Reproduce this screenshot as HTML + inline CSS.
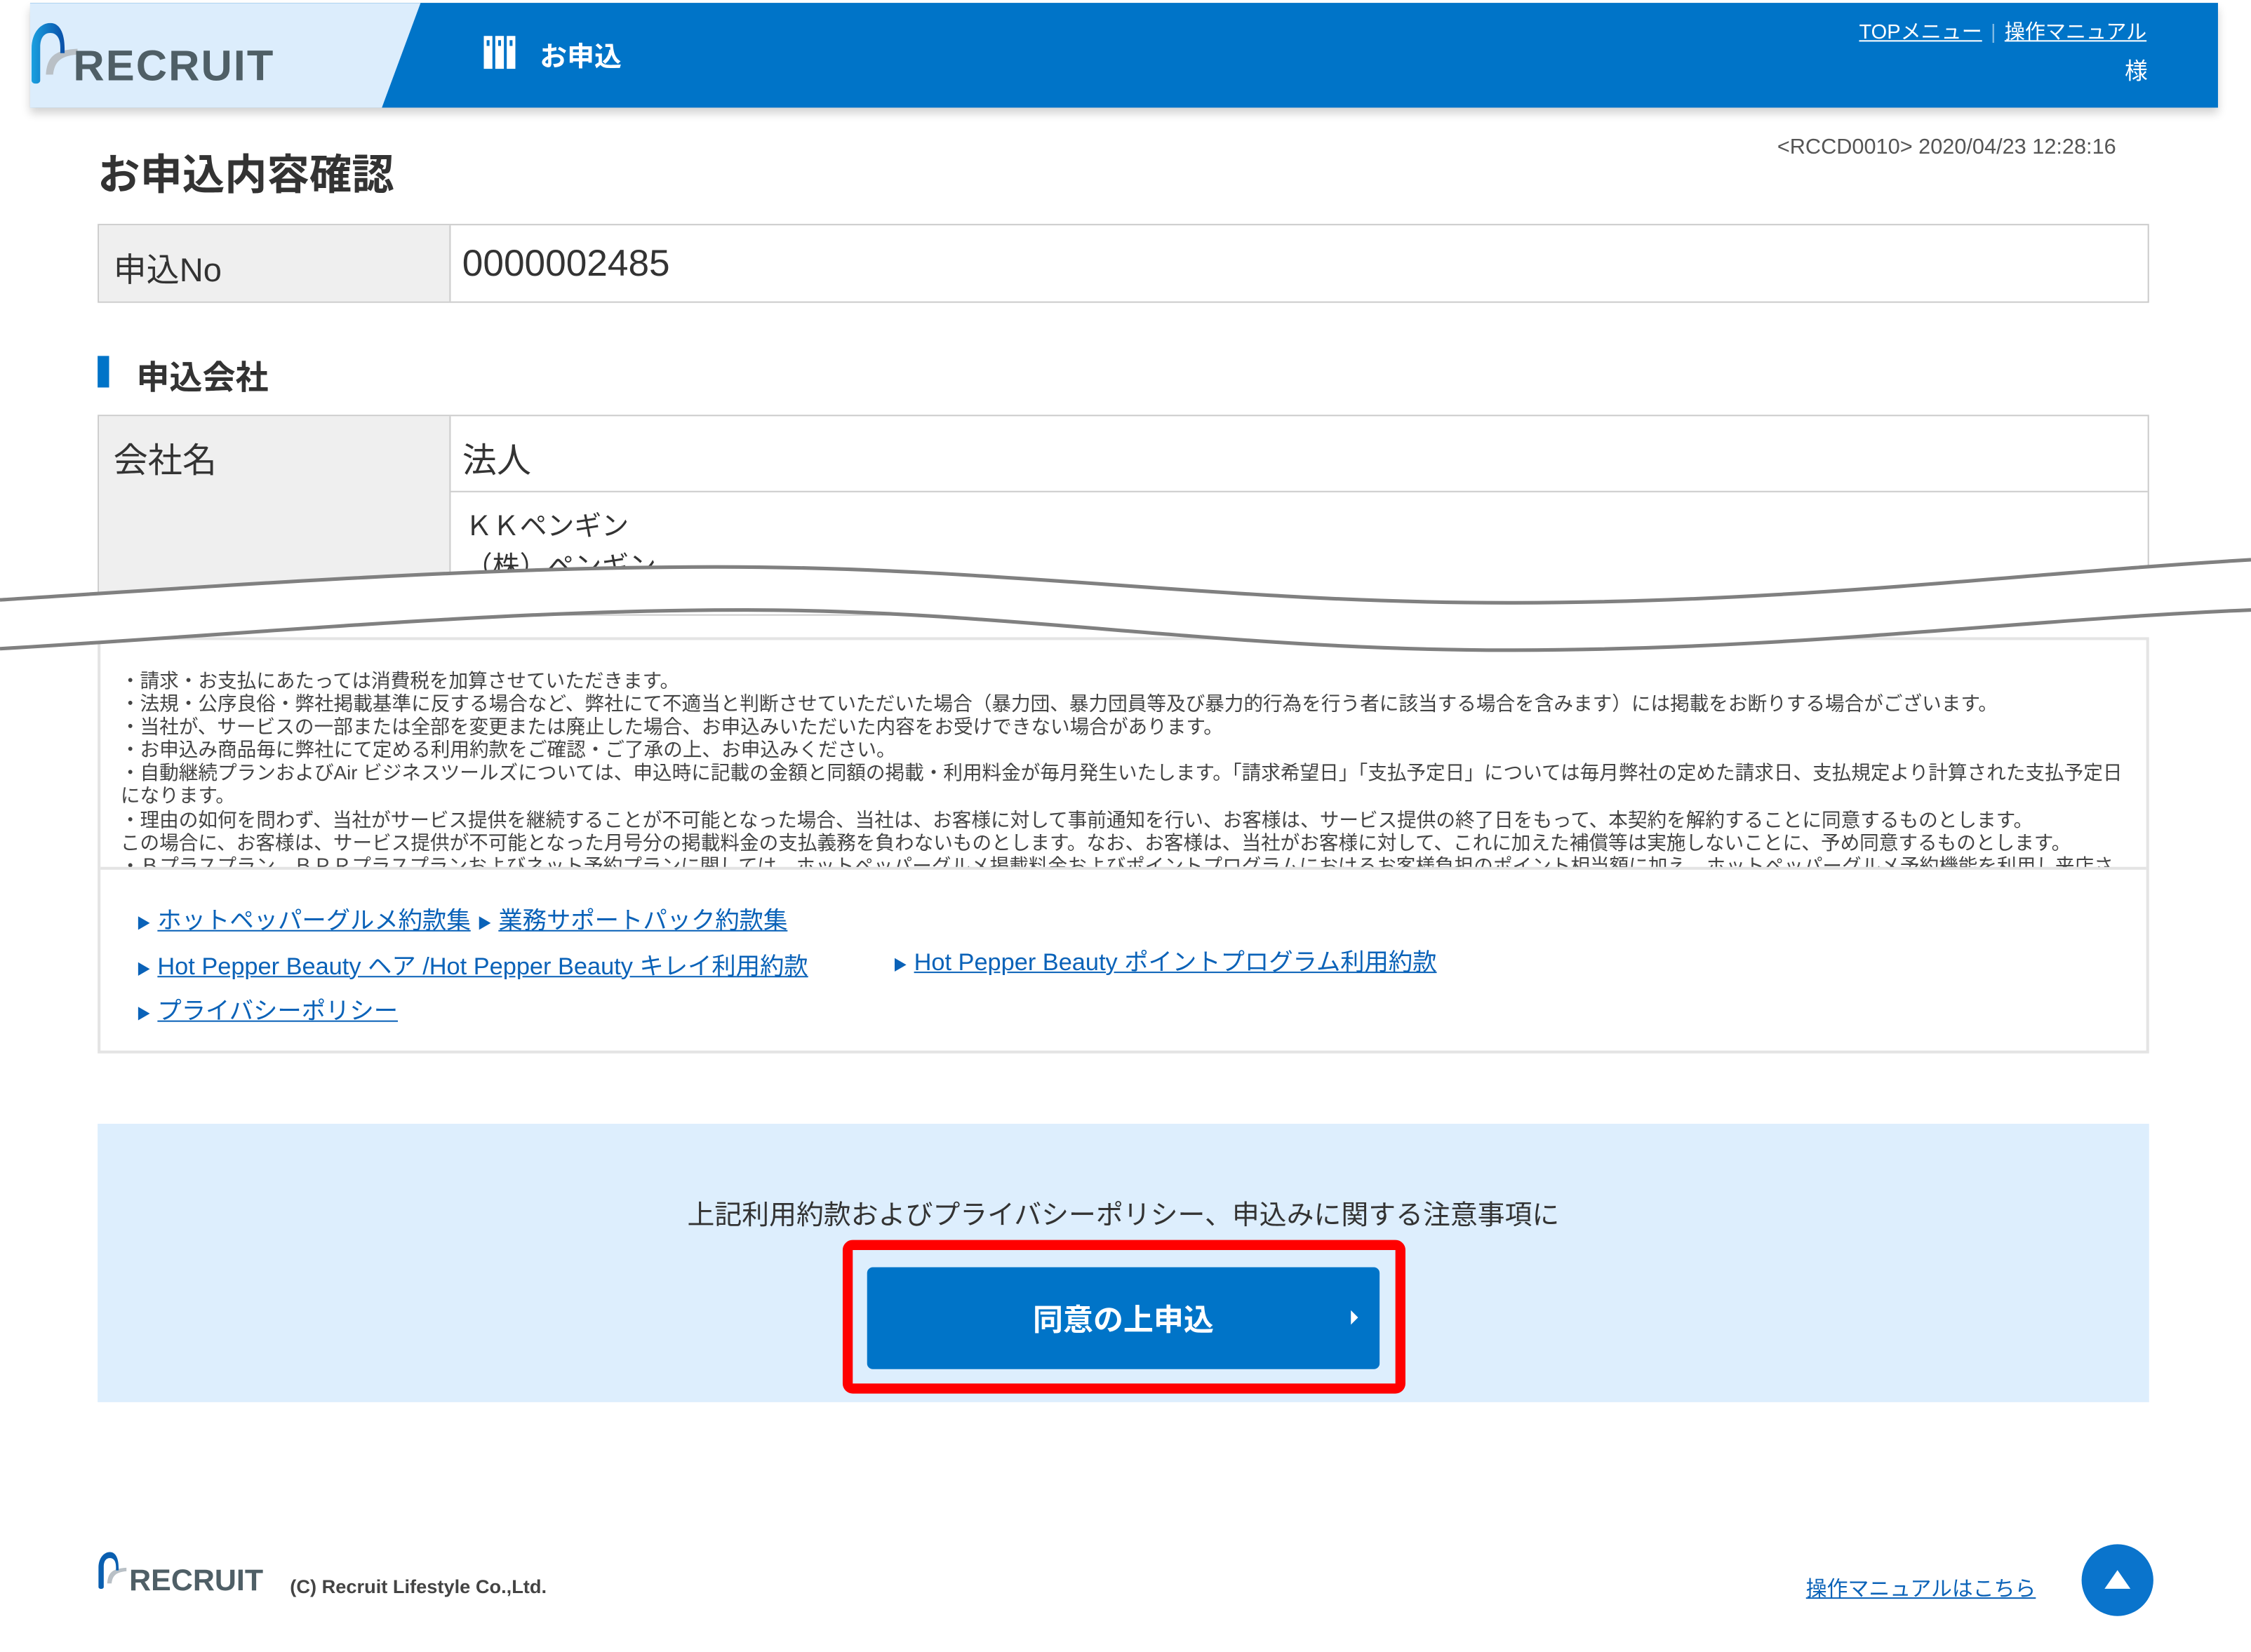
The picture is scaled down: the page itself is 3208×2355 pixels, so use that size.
<!DOCTYPE html>
<html><head><meta charset="utf-8"><style>
html,body{margin:0;padding:0;background:#fff;width:3208px;height:2355px;overflow:hidden}
#w{position:absolute;left:0;top:0;width:1568px;height:1151px;transform:scale(2.04592);transform-origin:0 0;font-family:"Liberation Sans","Noto Sans CJK JP",sans-serif;color:#333}
.a{position:absolute}
a{color:#0a62b8}
.lk{color:#0a62b8;text-decoration:underline}
</style></head><body><div id="w">
<div class="a" style="left:21px;top:2px;width:1524px;height:73px;background:#0074c8;box-shadow:0 4px 6px rgba(0,0,0,.18)"></div>
<div class="a" style="left:21px;top:2px;width:272px;height:73px;background:#dcedfc;clip-path:polygon(0 0,100% 0,245px 100%,0 100%)"></div>
<svg class="a" style="left:21px;top:16px" width="46" height="48" viewBox="0 0 46 48">
<defs><linearGradient id="g" x1="0" x2="1"><stop offset="0" stop-color="#1aa0e0"/><stop offset="1" stop-color="#0a4fa8"/></linearGradient></defs>
<path d="M11 36 C12 24 16 19 33 18 L33 22 C20 23 17 28 16 36Z" fill="#b9c0c6"/>
<path d="M1 40 L1 18 C1 6 8 0 14 0 C20 0 24 6 24 18 L24 21 L21 21 L21 17 C21 10 18 7 14 7 C10 7 7 10 7 17 L7 40 C7 43 1 43 1 40Z" fill="url(#g)"/>
</svg>
<div class="a" style="left:51px;top:30px;font-size:30px;font-weight:bold;color:#4f5f66;letter-spacing:1px">RECRUIT</div>
<svg class="a" style="left:337px;top:25px" width="22" height="23"><rect x="0" y="0" width="6" height="23" fill="#fff"/><rect x="8" y="0" width="6" height="23" fill="#fff"/><rect x="16" y="0" width="6" height="23" fill="#fff"/><rect x="2" y="3" width="2" height="4" fill="#0074c8"/><rect x="10" y="3" width="2" height="4" fill="#0074c8"/><rect x="18" y="3" width="2" height="4" fill="#0074c8"/></svg>
<div class="a" style="left:376px;top:25px;font-size:19px;font-weight:bold;color:#fff">お申込</div>
<div class="a" style="left:1295px;top:12px;font-size:14.2px;color:#fff"><span style="text-decoration:underline">TOPメニュー</span><span style="opacity:.5;margin:0 6px">|</span><span style="text-decoration:underline">操作マニュアル</span></div>
<div class="a" style="left:1480px;top:36px;font-size:16px;color:#fff">様</div>
<div class="a" style="left:68px;top:99px;font-size:29.5px;font-weight:bold;color:#333">お申込内容確認</div>
<div class="a" style="left:1238px;top:94px;font-size:15px;color:#555">&lt;RCCD0010&gt; 2020/04/23 12:28:16</div>
<div class="a" style="left:68px;top:156px;width:1429px;height:55px;border:1px solid #ccc;box-sizing:border-box"></div>
<div class="a" style="left:69px;top:157px;width:244px;height:53px;background:#efefef;border-right:1px solid #ccc"></div>
<div class="a" style="left:79px;top:169px;font-size:23px">申込No</div>
<div class="a" style="left:322px;top:168px;font-size:26px">0000002485</div>
<div class="a" style="left:68px;top:248px;width:8px;height:22px;background:#0074c8"></div>
<div class="a" style="left:95px;top:244px;font-size:23px;font-weight:bold">申込会社</div>
<div class="a" style="left:68px;top:289px;width:1429px;height:140px;border:1px solid #ccc;box-sizing:border-box"></div>
<div class="a" style="left:69px;top:290px;width:244px;height:140px;background:#efefef;border-right:1px solid #ccc"></div>
<div class="a" style="left:314px;top:342px;width:1182px;border-top:1px solid #ccc"></div>
<div class="a" style="left:79px;top:301px;font-size:24px">会社名</div>
<div class="a" style="left:322px;top:301px;font-size:24px">法人</div>
<div class="a" style="left:324px;top:352px;font-size:19px">ＫＫペンギン</div>
<div class="a" style="left:324px;top:380px;font-size:19px">（株）ペンギン</div>
<div class="a" style="left:68px;top:444px;width:1429px;height:290px;border:2px solid #e4e4e4;box-sizing:border-box;background:#fff"></div>
<div class="a" style="left:70px;top:604px;width:1425px;border-top:2px solid #e4e4e4"></div>
<div class="a" style="left:84px;top:467px;width:1400px;height:137px;overflow:hidden;font-size:13.5px;line-height:16.1px;color:#444">・請求・お支払にあたっては消費税を加算させていただきます。<br>・法規・公序良俗・弊社掲載基準に反する場合など、弊社にて不適当と判断させていただいた場合（暴力団、暴力団員等及び暴力的行為を行う者に該当する場合を含みます）には掲載をお断りする場合がございます。<br>・当社が、サービスの一部または全部を変更または廃止した場合、お申込みいただいた内容をお受けできない場合があります。<br>・お申込み商品毎に弊社にて定める利用約款をご確認・ご了承の上、お申込みください。<br>・自動継続プランおよびAir ビジネスツールズについては、申込時に記載の金額と同額の掲載・利用料金が毎月発生いたします。「請求希望日」「支払予定日」については毎月弊社の定めた請求日、支払規定より計算された支払予定日になります。<br>・理由の如何を問わず、当社がサービス提供を継続することが不可能となった場合、当社は、お客様に対して事前通知を行い、お客様は、サービス提供の終了日をもって、本契約を解約することに同意するものとします。<br>この場合に、お客様は、サービス提供が不可能となった月号分の掲載料金の支払義務を負わないものとします。なお、お客様は、当社がお客様に対して、これに加えた補償等は実施しないことに、予め同意するものとします。<br>・Ｂプラスプラン、ＢＰＲプラスプランおよびネット予約プランに関しては、ホットペッパーグルメ掲載料金およびポイントプログラムにおけるお客様負担のポイント相当額に加え、ホットペッパーグルメ予約機能を利用し来店さ</div>
<div class="a" style="left:95px;top:628px;font-size:16.8px;line-height:28.5px;color:#0a62b8">
<div><span style="font-size:10px">▶</span> <span class="lk">ホットペッパーグルメ約款集</span> <span style="font-size:10px">▶</span> <span class="lk">業務サポートパック約款集</span></div>
<div><span style="font-size:10px">▶</span> <span class="lk">Hot Pepper Beauty ヘア /Hot Pepper Beauty キレイ利用約款</span></div>
<div><span style="font-size:10px">▶</span> <span class="lk">プライバシーポリシー</span></div>
</div>
<div class="a" style="left:622px;top:657px;font-size:16.8px;color:#0a62b8"><span style="font-size:10px">▶</span> <span class="lk">Hot Pepper Beauty ポイントプログラム利用約款</span></div>
<svg class="a" style="left:0;top:380px" width="1568" height="90" viewBox="0 380 1568 90">
<path d="M0 418 C200 405 350 395 500 395 C700 395 850 420 1050 420 C1250 420 1400 400 1568 390 L1568 425 C1400 432 1250 453 1050 453 C850 453 700 425 520 425 C350 425 200 440 0 452Z" fill="#fff"/>
<path d="M0 418 C200 405 350 395 500 395 C700 395 850 420 1050 420 C1250 420 1400 400 1568 390" fill="none" stroke="#808080" stroke-width="2.5"/>
<path d="M0 452 C200 440 350 425 520 425 C700 425 850 453 1050 453 C1250 453 1400 432 1568 425" fill="none" stroke="#808080" stroke-width="2.5"/>
</svg>
<div class="a" style="left:68px;top:783px;width:1429px;height:194px;background:#ddeefd"></div>
<div class="a" style="left:68px;top:832px;width:1429px;text-align:center;font-size:19px;color:#333">上記利用約款およびプライバシーポリシー、申込みに関する注意事項に</div>
<div class="a" style="left:587px;top:864px;width:392px;height:107px;border:7px solid #f00;border-radius:7px;box-sizing:border-box"></div>
<div class="a" style="left:604px;top:883px;width:357px;height:71px;background:#0074c8;border-radius:4px"></div>
<div class="a" style="left:604px;top:904px;width:357px;text-align:center;font-size:21px;font-weight:bold;color:#fff">同意の上申込</div>
<div class="a" style="left:941px;top:913px;width:0;height:0;border-left:5px solid #fff;border-top:5px solid transparent;border-bottom:5px solid transparent"></div>
<svg class="a" style="left:68px;top:1080px" width="28" height="32" viewBox="0 0 46 48"><path d="M11 36 C12 24 16 19 33 18 L33 22 C20 23 17 28 16 36Z" fill="#b9c0c6"/><path d="M1 40 L1 18 C1 6 8 0 14 0 C20 0 24 6 24 18 L24 21 L21 21 L21 17 C21 10 18 7 14 7 C10 7 7 10 7 17 L7 40 C7 43 1 43 1 40Z" fill="#0a5fb0"/></svg>
<div class="a" style="left:90px;top:1090px;font-size:21px;font-weight:bold;color:#4f5f66">RECRUIT</div>
<div class="a" style="left:202px;top:1098px;font-size:13.3px;font-weight:bold;color:#444">(C) Recruit Lifestyle Co.,Ltd.</div>
<div class="a" style="left:1258px;top:1096px;font-size:14.6px;color:#0a62b8;text-decoration:underline">操作マニュアルはこちら</div>
<div class="a" style="left:1450px;top:1076px;width:50px;height:50px;border-radius:50%;background:#0a74cc"></div>
<div class="a" style="left:1466px;top:1094px;width:0;height:0;border-bottom:13px solid #fff;border-left:9px solid transparent;border-right:9px solid transparent"></div>
</div></body></html>
